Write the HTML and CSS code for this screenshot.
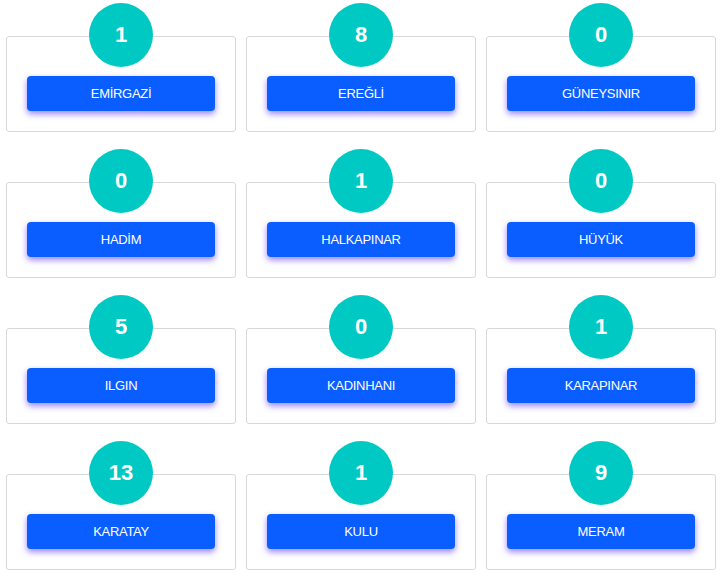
FILE: index.html
```html
<!DOCTYPE html>
<html lang="tr">
<head>
    <meta charset="UTF-8">
    <meta name="viewport" content="width=device-width, initial-scale=1.0">
    <title>İlçeler</title>
    <link rel="stylesheet" href="styles.css">
</head>
<body>
    <div class="grid">
        <div class="item">
            <div class="count">1</div>
            <div class="card"><a class="btn" href="#">EMİRGAZİ</a></div>
        </div>
        <div class="item">
            <div class="count">8</div>
            <div class="card"><a class="btn" href="#">EREĞLİ</a></div>
        </div>
        <div class="item">
            <div class="count">0</div>
            <div class="card"><a class="btn" href="#">GÜNEYSINIR</a></div>
        </div>
        <div class="item">
            <div class="count">0</div>
            <div class="card"><a class="btn" href="#">HADİM</a></div>
        </div>
        <div class="item">
            <div class="count">1</div>
            <div class="card"><a class="btn" href="#">HALKAPINAR</a></div>
        </div>
        <div class="item">
            <div class="count">0</div>
            <div class="card"><a class="btn" href="#">HÜYÜK</a></div>
        </div>
        <div class="item">
            <div class="count">5</div>
            <div class="card"><a class="btn" href="#">ILGIN</a></div>
        </div>
        <div class="item">
            <div class="count">0</div>
            <div class="card"><a class="btn" href="#">KADINHANI</a></div>
        </div>
        <div class="item">
            <div class="count">1</div>
            <div class="card"><a class="btn" href="#">KARAPINAR</a></div>
        </div>
        <div class="item">
            <div class="count">13</div>
            <div class="card"><a class="btn" href="#">KARATAY</a></div>
        </div>
        <div class="item">
            <div class="count">1</div>
            <div class="card"><a class="btn" href="#">KULU</a></div>
        </div>
        <div class="item">
            <div class="count">9</div>
            <div class="card"><a class="btn" href="#">MERAM</a></div>
        </div>
    </div>
</body>
</html>
```

FILE: styles.css
```css
body {
    font-family: "Liberation Sans", Arial, sans-serif;
    background-color: #fff;
    margin: 0;
    padding: 0;
}
.grid {
    display: grid;
    grid-template-columns: repeat(3, 230px);
    column-gap: 10px;
    row-gap: 17px;
    padding: 3px 0 0 6px;
}
.item {
    display: flex;
    flex-direction: column;
    align-items: center;
}
.count {
    width: 64px;
    height: 64px;
    border-radius: 50%;
    background-color: #00c9c4;
    color: #fff;
    font-size: 22px;
    font-weight: bold;
    display: flex;
    align-items: center;
    justify-content: center;
    margin-bottom: -31px;
    position: relative;
    z-index: 1;
}
.card {
    box-sizing: border-box;
    width: 230px;
    height: 96px;
    border: 1px solid #d6d9dc;
    border-radius: 3px;
    padding: 39px 20px 0;
}
.btn {
    display: flex;
    align-items: center;
    justify-content: center;
    height: 35px;
    background-color: #0a5eff;
    border-radius: 4px;
    color: #fff;
    font-size: 13px;
    letter-spacing: -0.3px;
    text-decoration: none;
    box-shadow: 0 3px 6px rgba(90, 50, 255, 0.6);
}
```
